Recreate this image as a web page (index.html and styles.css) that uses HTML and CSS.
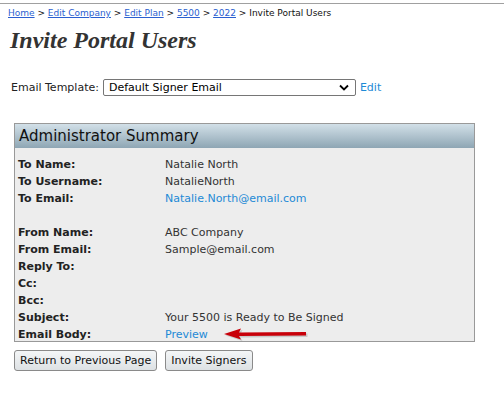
FILE: index.html
```html
<!DOCTYPE html>
<html lang="en">
<head>
    <meta charset="UTF-8">
    <title>Invite Portal Users</title>
    <link rel="stylesheet" href="styles.css">
</head>
<body>

    <!-- Breadcrumb -->
    <div class="crumbs">
        <a href="#">Home</a> &gt; <a href="#">Edit Company</a> &gt; <a href="#">Edit Plan</a> &gt;
        <a href="#">5500</a> &gt; <a href="#">2022</a> &gt; Invite Portal Users
    </div>

    <h1>Invite Portal Users</h1>

    <div class="template-row">
        <label for="template">Email Template:</label>
        <div class="select">
            <span>Default Signer Email</span>
            <svg width="10" height="7" viewBox="0 0 10 7"><path d="M1 1.5 L5 5.5 L9 1.5" fill="none" stroke="#000" stroke-width="1.8"/></svg>
        </div>
        <a href="#" class="blue">Edit</a>
    </div>

    <!-- Summary panel -->
    <div class="panel">
        <div class="panel-head">Administrator Summary</div>
        <div class="panel-body">
            <div class="row"><span class="label">To Name:</span><span>Natalie North</span></div>
            <div class="row"><span class="label">To Username:</span><span>NatalieNorth</span></div>
            <div class="row"><span class="label">To Email:</span><a href="#" class="blue">Natalie.North@email.com</a></div>
            <div class="row"></div>
            <div class="row"><span class="label">From Name:</span><span>ABC Company</span></div>
            <div class="row"><span class="label">From Email:</span><span>Sample@email.com</span></div>
            <div class="row"><span class="label">Reply To:</span><span></span></div>
            <div class="row"><span class="label">Cc:</span><span></span></div>
            <div class="row"><span class="label">Bcc:</span><span></span></div>
            <div class="row"><span class="label">Subject:</span><span>Your 5500 is Ready to Be Signed</span></div>
            <div class="row last">
                <span class="label">Email Body:</span>
                <span class="preview">
                    <a href="#" class="blue">Preview</a>
                    <svg class="arrow" width="90" height="14" viewBox="0 0 90 14">
                        <path d="M4 7 L21 1.5 L19 5.5 L86 5 L86 8.5 L19 9 L21 12.5 Z" fill="#888" opacity="0.35" transform="translate(1.5,1.5)"/>
                        <path d="M4 7 L21 1.5 L19 5.5 L86 5 L86 8.5 L19 9 L21 12.5 Z" fill="#c8000a"/>
                    </svg>
                </span>
            </div>
        </div>
    </div>

    <div class="buttons">
        <button>Return to Previous Page</button>
        <button>Invite Signers</button>
    </div>

</body>
</html>
```

FILE: styles.css
```css
body {
    margin: 0;
    padding: 0 0 0 8px;
    font-family: "DejaVu Sans", Verdana, sans-serif;
    font-size: 11px;
    color: #222;
    background: #fff;
    border-top: 1px solid #a0a0a0;
    margin-top: 3px;
}

a {
    color: #2b5fd0;
}

.blue {
    color: #1e8ad6;
    text-decoration: none;
}

.crumbs {
    font-size: 9px;
    line-height: 12px;
    padding-top: 3px;
    color: #111;
}

h1 {
    font-family: "Liberation Serif", "Times New Roman", serif;
    font-style: italic;
    font-weight: bold;
    font-size: 24px;
    color: #333;
    margin: 7px 0 0 2px;
    line-height: 28px;
}

.template-row {
    display: flex;
    align-items: center;
    gap: 4px;
    margin: 25px 0 0 3px;
    font-size: 11px;
}

.select {
    width: 240px;
    height: 15px;
    border: 1px solid #767676;
    border-radius: 2px;
    display: flex;
    align-items: center;
    justify-content: space-between;
    padding: 0 6px 0 5px;
    color: #000;
}

.panel {
    width: 459px;
    margin: 27px 0 0 6px;
    border: 1px solid #999;
    background: #ededed;
}

.panel-head {
    height: 24px;
    line-height: 25px;
    padding-left: 4px;
    font-size: 15px;
    color: #111;
    background: linear-gradient(#d2e0e8, #8ea6b4);
}

.panel-body {
    padding: 8px 0 0 3px;
}

.row {
    display: grid;
    grid-template-columns: 147px 1fr;
    height: 17px;
    line-height: 17px;
    color: #333;
}

.row.last {
    height: 15px;
}

.label {
    font-weight: bold;
    color: #222;
}

.preview {
    display: flex;
    align-items: center;
    gap: 12px;
}

.arrow {
    margin-top: -2px;
}

.buttons {
    display: flex;
    gap: 8px;
    margin: 8px 0 0 6px;
}

button {
    font-family: "DejaVu Sans", Verdana, sans-serif;
    font-size: 11px;
    color: #111;
    height: 21px;
    padding: 0 5px;
    border: 1px solid #8a8a8a;
    border-radius: 3px;
    background: linear-gradient(#f4f6f7, #dde1e4);
}
```
